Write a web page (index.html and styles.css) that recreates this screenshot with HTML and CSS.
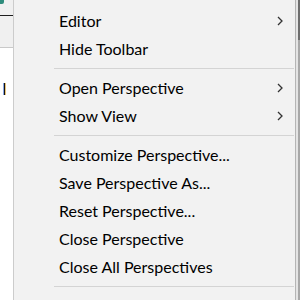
FILE: index.html
```html
<!DOCTYPE html>
<html lang="en">
<head>
    <meta charset="UTF-8">
    <title>Window menu</title>
    <link rel="stylesheet" href="styles.css">
</head>
<body>
<div class="screen">
    <div class="pane-left">
        <div class="toolbar"><span class="tb-icon"></span></div>
        <div class="tabs"></div>
        <div class="editor"><span class="caret"></span></div>
    </div>
    <div class="menu">
        <div class="item sub"><span>Editor</span><svg class="chev" width="6" height="10" viewBox="0 0 6 10"><polyline points="1,1 5,5 1,9"/></svg></div>
        <div class="item">Hide Toolbar</div>
        <div class="sep"></div>
        <div class="item sub"><span>Open Perspective</span><svg class="chev" width="6" height="10" viewBox="0 0 6 10"><polyline points="1,1 5,5 1,9"/></svg></div>
        <div class="item sub"><span>Show View</span><svg class="chev" width="6" height="10" viewBox="0 0 6 10"><polyline points="1,1 5,5 1,9"/></svg></div>
        <div class="sep"></div>
        <div class="item">Customize Perspective...</div>
        <div class="item">Save Perspective As...</div>
        <div class="item">Reset Perspective...</div>
        <div class="item">Close Perspective</div>
        <div class="item">Close All Perspectives</div>
        <div class="sep"></div>
        <div class="item">Navigation</div>
    </div>
    <div class="pane-right">
        <div class="rp-top"></div>
        <div class="rp-bottom"></div>
    </div>
</div>
</body>
</html>
```

FILE: styles.css
```css
*{
    margin: 0;
    padding: 0;
}
body{
    background: #ffffff;
    font-family: Lato, "Liberation Sans", sans-serif;
}
.screen{
    display: flex;
    width: 300px;
    height: 300px;
    overflow: hidden;
}
/* window behind the menu */
.pane-left{
    width: 13px;
    display: flex;
    flex-direction: column;
}
.toolbar{
    height: 15px;
    background: #f0f0f0;
    border-bottom: 1px solid #1e1e1e;
}
.tb-icon{
    display: block;
    width: 4px;
    height: 4px;
    background: #2e8c7c;
    border-bottom-right-radius: 2px;
}
.tabs{
    height: 31px;
    background: #f0f0f0;
    border-bottom: 1px solid #c9c9c9;
}
.editor{
    flex: 1;
    background: #ffffff;
    padding: 35px 0 0 3px;
}
.caret{
    display: block;
    width: 1px;
    height: 12px;
    background: #111;
    border-left: 1px solid #8aa6e0;
    border-right: 1px solid #e6c278;
}
.pane-right{
    width: 4px;
    display: flex;
    flex-direction: column;
    background: linear-gradient(to right, #e4e4e4 0, #e4e4e4 2px, #a8a8a8 2px);
}
.rp-top{
    height: 40px;
    background: linear-gradient(to right, #e4e4e4 0, #e4e4e4 2px, #6e6e6e 2px);
}
.rp-bottom{
    flex: 1;
}
/* popup menu */
.menu{
    width: 283px;
    box-sizing: border-box;
    background: #f2f2f2;
    border-left: 1px solid #cccccc;
    border-right: 1px solid #b5b5b5;
    padding-top: 7px;
}
.item{
    height: 28px;
    line-height: 28px;
    padding: 0 12px 0 45px;
    font-size: 16px;
    color: #000;
    white-space: nowrap;
}
.item.sub{
    display: flex;
    justify-content: space-between;
    align-items: center;
}
.chev{
    fill: none;
    stroke: #333;
    stroke-width: 1.3;
}
.sep{
    height: 1px;
    margin: 5px 1px 5px 40px;
    background: #d4d4d4;
}
```
